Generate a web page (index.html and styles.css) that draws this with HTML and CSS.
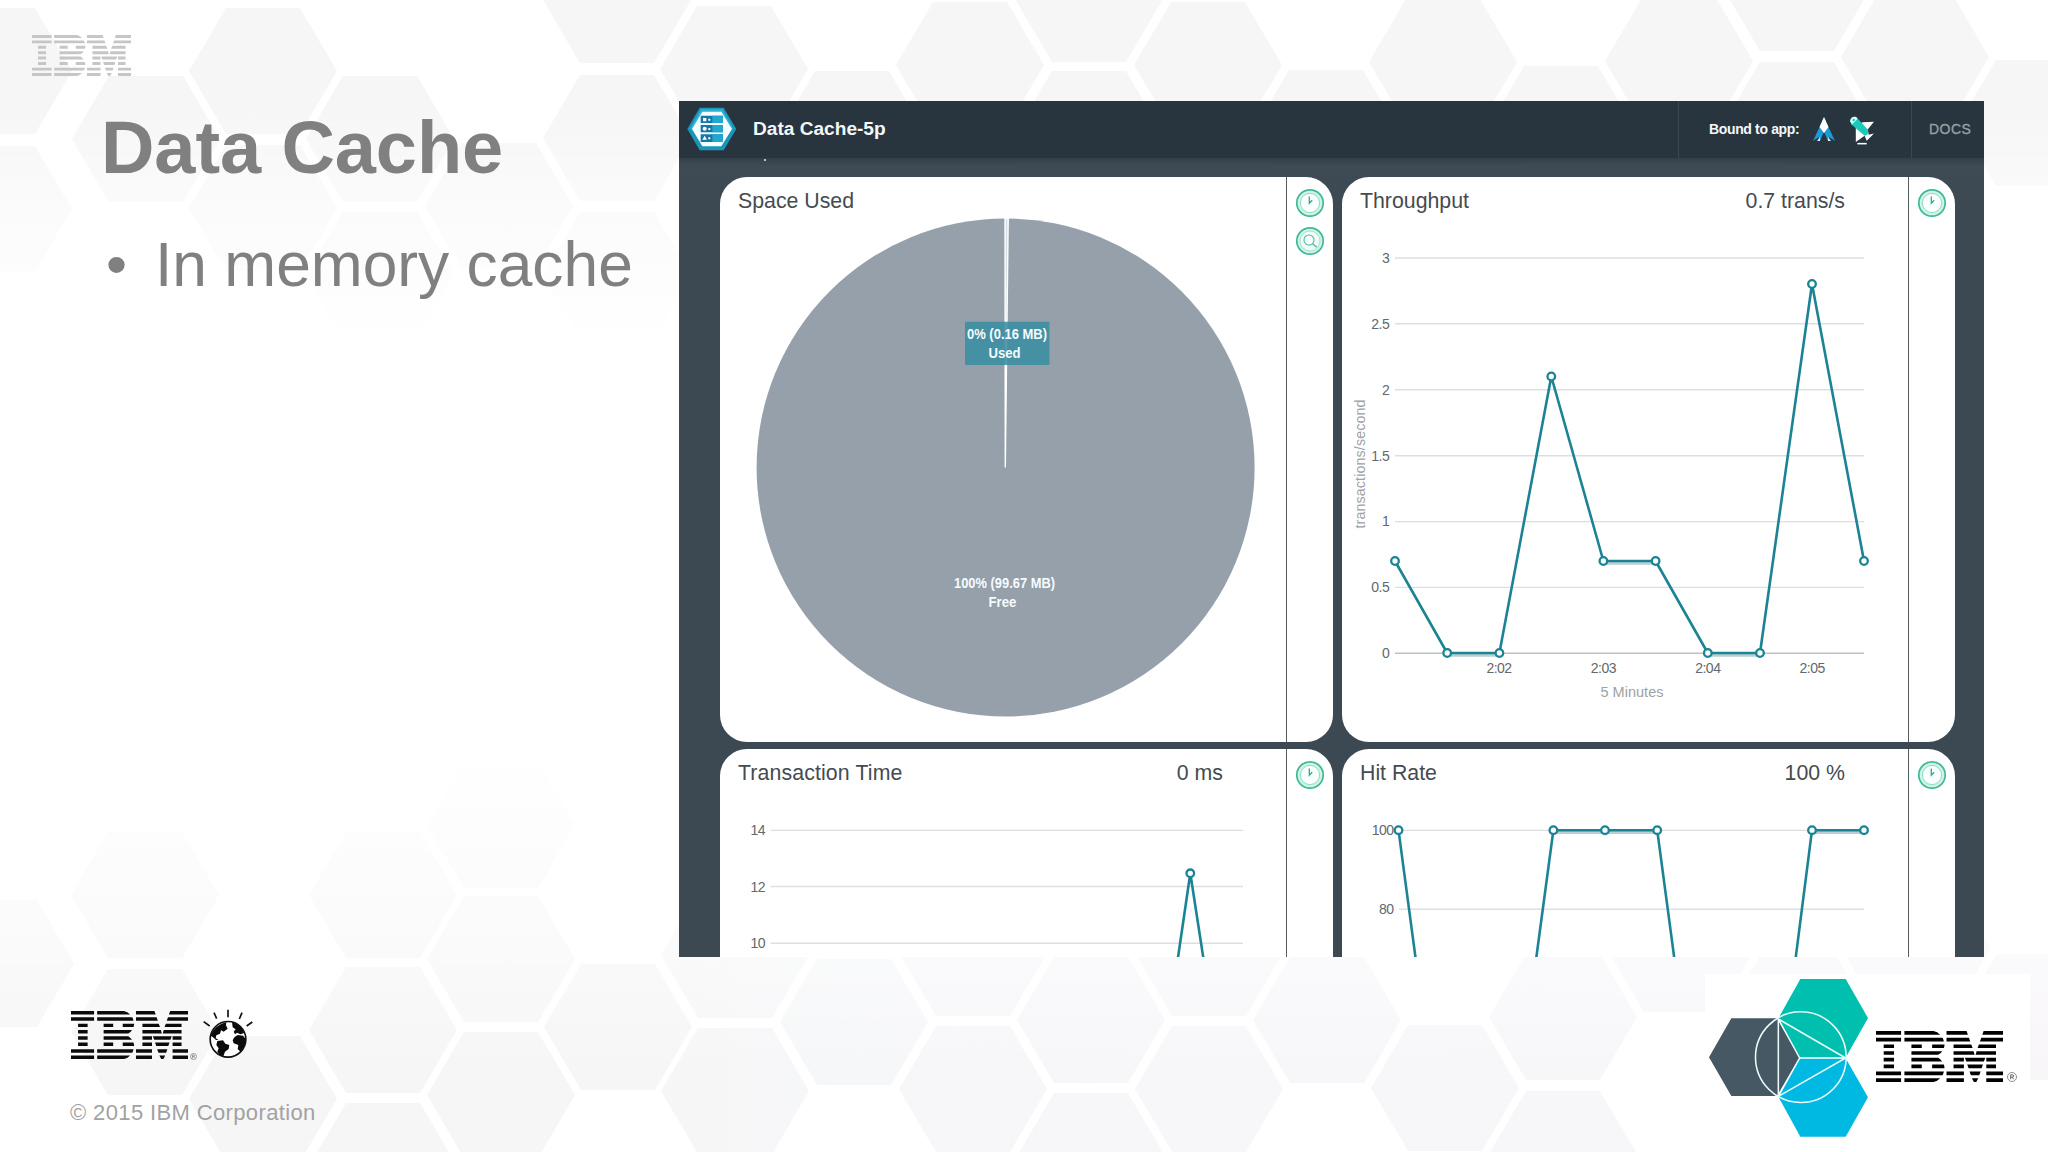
FILE: index.html
```html
<!DOCTYPE html>
<html lang="en">
<head>
<meta charset="utf-8">
<title>Data Cache</title>
<link rel="stylesheet" href="styles.css">
</head>
<body>
<svg class="defs" width="0" height="0" aria-hidden="true">
  <defs>
    <symbol id="ibm" viewBox="0 0 380 152" preserveAspectRatio="none">
      <path d="M0 0H75V11H0zM0 20H75V31H0zM23 40H54V51H23zM23 60H54V71H23zM23 80H54V91H23zM23 100H54V111H23zM0 121H75V132H0zM0 141H75V152H0z"/>
      <path d="M85 0H172Q184 2 192 11H85zM85 20H199Q202 25 203 31H85zM106 40H137V51H106zM168 40H205Q205 46 203 51H168zM106 60H198Q194 67 186 71H106zM106 80H186Q194 85 198 91H106zM106 100H137V111H106zM168 100H203Q205 106 205 111H168zM85 121H203Q202 127 199 132H85zM85 141H192Q184 150 172 152H85z"/>
      <path d="M211 0H271L275 11H211zM322 0H380V11H318zM211 20H278L282 31H211zM315 20H380V31H311zM232 40H285L289 51H232zM308 40H359V51H304zM232 60H292L295 71H232zM301 60H359V71H298zM232 80H263V91H232zM266 80H327L323 91H270zM330 80H359V91H330zM232 100H263V111H232zM273 100H320L316 111H277zM330 100H359V111H330zM211 121H263V132H211zM280 121H313L309 132H284zM330 121H380V132H330zM211 141H263V152H211zM287 141H306L300 152H293zM330 141H380V152H330z"/>
    </symbol>
    <symbol id="clock" viewBox="0 0 30 30">
      <circle cx="15" cy="15" r="13.2" fill="#d0f3e8" stroke="#3fb896" stroke-width="1.7"/>
      <circle cx="15" cy="15" r="9.6" fill="#fafffd" stroke="#8edcc6" stroke-width="1"/>
      <path d="M14.3 8.5V15.2L17.2 12.2" fill="none" stroke="#2fa889" stroke-width="1.3"/>
    </symbol>
    <symbol id="search" viewBox="0 0 30 30">
      <circle cx="15" cy="15" r="13.2" fill="#d0f3e8" stroke="#3fb896" stroke-width="1.7"/>
      <circle cx="15" cy="15" r="10" fill="#eefbf7" stroke="#a5e4d2" stroke-width="1"/>
      <circle cx="14" cy="14" r="5" fill="#f6fffc" stroke="#55b99e" stroke-width="1.1"/>
      <path d="M17.6 17.8L21.8 21.2" stroke="#55b99e" stroke-width="1.4"/>
    </symbol>
  </defs>
</svg>

<div class="slide">
  <svg class="backdrop" viewBox="0 0 2048 1152" aria-hidden="true">
    <defs>
      <linearGradient id="tint" gradientUnits="userSpaceOnUse" x1="0" y1="0" x2="2048" y2="0">
        <stop offset="0.3" stop-color="#f6f6f6"/><stop offset="0.42" stop-color="#f6f7f9"/><stop offset="0.55" stop-color="#f7f6f9"/><stop offset="1" stop-color="#f8f6f9"/>
      </linearGradient>
      <linearGradient id="fade" x1="0" y1="0" x2="0" y2="1">
        <stop offset="0" stop-color="#fff" stop-opacity="0"/><stop offset="0.09" stop-color="#fff" stop-opacity="0"/><stop offset="0.18" stop-color="#fff" stop-opacity="0.55"/><stop offset="0.3" stop-color="#fff"/><stop offset="0.65" stop-color="#fff"/><stop offset="0.8" stop-color="#fff" stop-opacity="0.55"/><stop offset="0.93" stop-color="#fff" stop-opacity="0"/>
      </linearGradient>
      <path id="cell" d="M-37 -63H37L74 0L37 63H-37L-74 0z"/>
    </defs>
    <g fill="#f6f6f6">
      <use href="#cell" x="-2" y="71"/><use href="#cell" x="-2" y="209"/>
      <use href="#cell" x="146" y="139"/>
      <use href="#cell" x="263" y="71"/><use href="#cell" x="263" y="208"/>
      <use href="#cell" x="380" y="139"/><use href="#cell" x="380" y="275"/>
      <use href="#cell" x="499" y="206"/>
      <use href="#cell" x="617" y="0"/><use href="#cell" x="617" y="138"/><use href="#cell" x="617" y="275"/>
      <use href="#cell" x="734" y="69"/><use href="#cell" x="852" y="134"/>
      <use href="#cell" x="970" y="65"/>
      <use href="#cell" x="1089" y="-1"/><use href="#cell" x="1089" y="134"/>
      <use href="#cell" x="1208" y="65"/><use href="#cell" x="1326" y="133"/>
      <use href="#cell" x="1443" y="62"/><use href="#cell" x="1561" y="129"/>
      <use href="#cell" x="1679" y="61"/>
      <use href="#cell" x="1797" y="-12"/><use href="#cell" x="1797" y="125"/>
      <use href="#cell" x="1915" y="57"/><use href="#cell" x="2033" y="123"/>
    </g>
    <path fill="url(#tint)" d="M-74 900H37L74 964L37 1027H-74z
      M108 832h74l37 63l-37 63h-74l-37-63z M108 969h74l37 63l-37 63h-74l-37-63z
      M226 1036h74l37 63l-37 63h-74l-37-63z
      M346 832h74l37 63l-37 63h-74l-37-63z M346 967h74l37 63l-37 63h-74l-37-63z M346 1103h74l37 63h-148z
      M464 762h74l37 63l-37 63h-74l-37-63z M464 896h74l37 63l-37 63h-74l-37-63z M464 1032h74l37 63l-37 63h-74l-37-63z
      M581 964h74l37 63l-37 63h-74l-37-63z
      M698 892h74l37 63l-37 63h-74l-37-63z M698 1028h74l37 63l-37 63h-74l-37-63z
      M817 959h74l37 63l-37 63h-74l-37-63z
      M936 890h74l37 63l-37 63h-74l-37-63z M936 1026h74l37 63l-37 63h-74l-37-63z
      M1054 957h74l37 63l-37 63h-74l-37-63z M1054 1093h74l37 63h-148z
      M1172 890h74l37 63l-37 63h-74l-37-63z M1172 1026h74l37 63l-37 63h-74l-37-63z
      M1290 957h74l37 63l-37 63h-74l-37-63z
      M1408 1025h74l37 63l-37 63h-74l-37-63z
      M1526 954h74l37 63l-37 63h-74l-37-63z M1526 1091h74l37 63h-148z
      M1644 886h74l37 63l-37 63h-74l-37-63z M1761 954h74l37 63l-37 63h-74l-37-63z
      M1879 886h74l37 63l-37 63h-74l-37-63z M1997 954h74l37 63l-37 63h-74l-37-63z"/>
    <rect width="2048" height="1152" fill="url(#fade)"/>
  </svg>

  <header class="brand-bar">
    <svg class="brand-mark"><use href="#ibm"/></svg>
  </header>

  <main class="content">
    <section class="notes">
      <h1 class="notes-title">Data Cache</h1>
      <ul class="notes-list"><li class="notes-item"><span class="bullet">•</span><span>In memory cache</span></li></ul>
    </section>

    <section class="console">
      <div class="console-bar">
        <svg class="service-icon" viewBox="22 34 150 132">
          <path d="M23 100L60 36H132L170 100L132 164H60z" fill="#1b94b8"/>
          <path d="M31 100L64 41H128L162 100z" fill="#2bb3d3"/>
          <path d="M37 100L68 48H125L157 100L125 152H68z" fill="#f4fdff"/>
          <path d="M63 60H130V82H63zM63 88H130V110H63zM63 116H130V139H63z" fill="#1378a8"/>
          <path d="M98 60H130V82H98zM98 88H130V110H98zM98 116H130V139H98z" fill="#22a7cf"/>
          <path d="M70 67h10v10h-10zM86 69h6v6h-6zM86 97h6v6h-6zM86 125h6v6h-6zM75 120l7 12h-14z" fill="#fff"/><circle cx="75" cy="99" r="6" fill="#fff"/>
        </svg>
        <h2 class="service-name">Data Cache-5p</h2>
        <div class="bound">
          <span class="bound-label">Bound to app:</span>
          <svg class="rocket" viewBox="0 0 22 26">
            <path d="M11 1L14 8L22 25L16 21L15 25L11 16L7 25L6 21L0 25L8 8z" fill="#1d9ad6"/>
            <path d="M11 1L15.5 11L11 17L6.5 11z" fill="#fff"/><path d="M4 25l3-4v4zM18 25l-3-4v4z" fill="#d5edf8"/>
          </svg>
          <svg class="plane" viewBox="0 0 24 28">
            <path d="M13 6L24 5.5L18 13L19 18L24 17L20 21L17 24L15 19L6.5 25V11z" fill="#fff"/>
            <path d="M1 4Q3 0 7 1L18 13Q20 18 15 19L2 8z" fill="#1cc9bb"/>
            <path d="M1 5Q2 0 7 1L8 3L3 8z" fill="#d8fffb"/><circle cx="4.4" cy="3.8" r="1.2" fill="#1cc9bb"/><path d="M8 26.7h9" stroke="#fff" stroke-width="1.5"/>
          </svg>
        </div>
        <span class="docs">DOCS</span>
      </div>

      <div class="board">
        <i class="scroll-speck"></i>
        <article class="card">
          <div class="card-main">
            <div class="card-head"><span>Space Used</span></div>
            <svg class="plot" viewBox="720 217 566 525">
              <circle cx="1005.6" cy="467.5" r="249" fill="#95a0aa"/>
              <path d="M1005.3 467.5L1005 218.6H1008.2z" fill="#d5dfe5" stroke="#fff" stroke-width="1.4"/>
              <rect x="965" y="321.7" width="84.4" height="43.3" rx="1" fill="#3a8da2" fill-opacity=".88"/>
              <g class="pie-label">
                <text x="967" y="338.6" textLength="80" lengthAdjust="spacingAndGlyphs">0% (0.16 MB)</text>
                <text x="988.5" y="357.6" textLength="32" lengthAdjust="spacingAndGlyphs">Used</text>
                <text x="954" y="588.2" textLength="101" lengthAdjust="spacingAndGlyphs">100% (99.67 MB)</text>
                <text x="988.5" y="607" textLength="28" lengthAdjust="spacingAndGlyphs">Free</text>
              </g>
            </svg>
          </div>
          <aside class="card-tools"><svg class="tool"><use href="#clock"/></svg><svg class="tool"><use href="#search"/></svg></aside>
        </article>

        <article class="card">
          <div class="card-main">
            <div class="card-head"><span>Throughput</span><span>0.7 trans/s</span></div>
            <svg class="plot" viewBox="1342 217 566 525">
              <path class="grid" d="M1395 258H1864M1395 323.8H1864M1395 389.8H1864M1395 455.7H1864M1395 521.6H1864M1395 587.4H1864"/>
              <path class="axis" d="M1395 653.3H1864"/>
              <g class="tick end">
                <text x="1389.3" y="262.5">3</text><text x="1389.3" y="328.5">2.5</text><text x="1389.3" y="394.5">2</text><text x="1389.3" y="460.5">1.5</text><text x="1389.3" y="526.3">1</text><text x="1389.3" y="592.3">0.5</text><text x="1389.3" y="658">0</text>
              </g>
              <g class="tick mid">
                <text x="1499" y="673.3">2:02</text><text x="1603.4" y="673.3">2:03</text><text x="1707.8" y="673.3">2:04</text><text x="1812.2" y="673.3">2:05</text>
              </g>
              <text class="axis-name" x="1600.5" y="697" textLength="63" lengthAdjust="spacingAndGlyphs">5 Minutes</text>
              <text class="axis-name" transform="translate(1365.3 528.5) rotate(-90)" textLength="129" lengthAdjust="spacing">transactions/second</text>
              <path class="shade" d="M1447.2 655.3H1499.4M1603.4 563.3H1655.6M1707.8 655.3H1760"/>
              <path class="series" d="M1395 561L1447.2 653H1499.4L1551.3 376.5L1603.4 561H1655.6L1707.8 653H1760L1812 284L1864 561"/>
              <g class="dots"><circle cx="1395" cy="561" r="3.8"/><circle cx="1447.2" cy="653" r="3.8"/><circle cx="1499.4" cy="653" r="3.8"/><circle cx="1551.3" cy="376.5" r="3.8"/><circle cx="1603.4" cy="561" r="3.8"/><circle cx="1655.6" cy="561" r="3.8"/><circle cx="1707.8" cy="653" r="3.8"/><circle cx="1760" cy="653" r="3.8"/><circle cx="1812" cy="284" r="3.8"/><circle cx="1864" cy="561" r="3.8"/></g>
            </svg>
          </div>
          <aside class="card-tools"><svg class="tool"><use href="#clock"/></svg></aside>
        </article>

        <article class="card">
          <div class="card-main">
            <div class="card-head"><span class="wide">Transaction Time</span><span>0 ms</span></div>
            <svg class="plot" viewBox="720 789 566 525">
              <path class="grid" d="M770.6 830.4H1243M770.6 886.5H1243M770.6 943.3H1243"/>
              <g class="tick end"><text x="765" y="834.8">14</text><text x="765" y="891.5">12</text><text x="765" y="947.8">10</text></g>
              <path class="series" d="M1174 985L1190.3 873.3L1207.5 985"/>
              <g class="dots"><circle cx="1190.3" cy="873.3" r="3.8"/></g>
            </svg>
          </div>
          <aside class="card-tools"><svg class="tool"><use href="#clock"/></svg></aside>
        </article>

        <article class="card">
          <div class="card-main">
            <div class="card-head"><span>Hit Rate</span><span>100 %</span></div>
            <svg class="plot" viewBox="1342 789 566 525">
              <path class="grid" d="M1399 830.4H1864M1399 909.2H1864"/>
              <g class="tick end"><text x="1393.5" y="835">100</text><text x="1393.5" y="914">80</text></g>
              <path class="shade" d="M1553.4 832.4H1657.2M1812 832.4H1864"/>
              <path class="series" d="M1398.5 830.2L1417.3 971M1534.5 971L1553.4 830.2H1657.2L1676 971M1794 971L1812 830.2H1864"/>
              <g class="dots"><circle cx="1398.5" cy="830.2" r="3.8"/><circle cx="1553.4" cy="830.2" r="3.8"/><circle cx="1605" cy="830.2" r="3.8"/><circle cx="1657.2" cy="830.2" r="3.8"/><circle cx="1812" cy="830.2" r="3.8"/><circle cx="1864" cy="830.2" r="3.8"/></g>
            </svg>
          </div>
          <aside class="card-tools"><svg class="tool"><use href="#clock"/></svg></aside>
        </article>
      </div>
    </section>
  </main>

  <footer class="foot">
    <div class="foot-left">
      <div class="foot-logos">
        <svg class="foot-ibm"><use href="#ibm"/></svg>
        <svg class="reg" viewBox="0 0 10 10"><circle cx="5" cy="5" r="4.3" fill="none" stroke="#777"/><path d="M3.5 7.5V2.8H5.3Q6.7 2.8 6.7 4Q6.7 5.1 5.3 5.1H3.5M5.2 5.1L6.8 7.5" fill="none" stroke="#777"/></svg>
        <svg class="planet" viewBox="455 55 156 156">
          <path d="M460 96L478 109M491 69L499 87M533 60V83M575 69L567 88M606 97L589 109" stroke="#111" stroke-width="5" fill="none"/>
          <circle cx="533" cy="149" r="53.5" fill="#fff" stroke="#111" stroke-width="5"/>
          <path d="M481 138Q490 108 528 97L527 107L532 117L520 126L512 122L509 132L498 137L496 146L505 150L497 151L488 143z" fill="#0b0b0b"/>
          <path d="M501 154L518 152L525 162L537 166L535 178L524 186L519 200Q507 197 501 186L505 176L498 166z" fill="#0b0b0b"/>
          <path d="M545 97Q572 105 582 130L570 134L560 129L554 134L550 126L556 119L547 113z" fill="#0b0b0b"/>
          <path d="M552 143L562 136L578 138L586 148Q585 172 570 186L562 178L564 166L550 161L547 152z" fill="#0b0b0b"/>
        </svg>
      </div>
      <p class="copyright">© 2015 IBM Corporation</p>
    </div>
    <div class="foot-right">
      <svg class="bluemix" viewBox="85 54 483 480">
        <path d="M88 292L155 175H292L360 292L292 408H155z" fill="#465864"/>
        <path d="M362 57H498L565 174L498 293H360L296 175z" fill="#00bfae"/>
        <path d="M360 295H498L565 412L498 530H362L296 410z" fill="#00b9e2"/>
        <g fill="none" stroke="#effcfc" stroke-width="4.6"><circle cx="363.5" cy="291.5" r="136"/><path d="M296 177V409M296 177L498 294L296 409M296 177L360 294L296 409M360 294H498"/></g>
      </svg>
      <svg class="right-ibm"><use href="#ibm"/></svg>
      <svg class="reg reg-big" viewBox="0 0 10 10"><circle cx="5" cy="5" r="4.5" fill="none" stroke="#777" stroke-width=".8"/><path d="M3.7 7.3V2.8H5.3Q6.6 2.8 6.6 4Q6.6 5.1 5.3 5.1H3.7M5.2 5.1L6.7 7.3" fill="none" stroke="#666"/></svg>
    </div>
  </footer>
</div>
</body>
</html>
```
FILE: styles.css
```css
* { box-sizing: border-box; }
body { margin: 0; background: #fff; font-family: "Liberation Sans", Arial, sans-serif; }
svg { display: block; flex: none; }
.defs { position: absolute; }
h1, h2, p, ul { margin: 0; padding: 0; list-style: none; }

.slide { position: relative; width: 2048px; height: 1152px; overflow: hidden; background: #fff; display: flex; flex-direction: column; isolation: isolate; }
.backdrop { position: absolute; inset: 0; width: 2048px; height: 1152px; z-index: -1; }

.brand-bar { height: 101px; padding: 35px 0 0 32px; flex: none; }
.brand-mark { width: 99px; height: 41px; fill: #c6c6c6; }

.content { display: flex; height: 856px; flex: none; }
.notes { width: 679px; flex: none; padding-left: 101px; color: #808080; white-space: nowrap; }
.notes-title { padding-top: 5px; font-size: 74px; line-height: 84px; font-weight: 700; letter-spacing: -0.1px; }
.notes-list { padding-top: 40px; }
.notes-item { display: flex; font-size: 62.3px; line-height: 70px; }
.bullet { width: 48px; margin: 0 1px 0 5px; flex: none; font-size: 60px; }

.console { width: 1305px; overflow: hidden; background: #3c4953; display: flex; flex-direction: column; }
.console-bar { height: 57px; flex: none; display: flex; align-items: center; background: #28343e; color: #f2f8fb; white-space: nowrap; padding-bottom: 1px; }
.service-icon { width: 50px; height: 44px; margin: 0 16px 1px 8px; }
.service-name { flex: 1; font-size: 19.1px; line-height: 22px; font-weight: 700; }
.bound { width: 233px; height: 57px; border-left: 1px solid #3c4750; display: flex; align-items: center; padding-left: 30px; }
.bound-label { width: 104px; font-size: 14px; letter-spacing: -0.35px; font-weight: 700; }
.rocket { width: 22px; height: 26px; }
.plane { width: 25px; height: 29px; margin: 2px 0 0 14px; }
.docs { width: 73px; height: 57px; line-height: 56px; border-left: 1px solid #3c4750; padding-left: 17px; color: #98a1a7; font-size: 14px; letter-spacing: 0.5px; -webkit-text-stroke: 0.3px #98a1a7; }

.board { position: relative; flex: 1; min-height: 0; display: grid; grid-template-columns: 613px 613px; grid-template-rows: 565px 565px; gap: 7px 9px; padding: 19px 0 0 41px; background: linear-gradient(#33404a, #3e4b55 8px, #3c4953 60px); }
.scroll-speck { position: absolute; left: 85px; top: 1px; width: 2px; height: 2px; background: #b9c5cc; }
.card { display: flex; border-radius: 27px; overflow: hidden; background: #fff; }
.card-main { width: 566px; flex: none; }
.card-head { height: 40px; padding: 12px 63px 0 18px; display: flex; justify-content: space-between; color: #454b50; font-size: 21.3px; line-height: 24px; white-space: nowrap; }
.wide { letter-spacing: 0.12px; }
.plot { width: 566px; height: 525px; }
.card-tools { flex: 1; border-left: 1px solid #535b60; padding-top: 11px; display: flex; flex-direction: column; align-items: center; gap: 8px; }
.tool { width: 30px; height: 30px; }

.grid { stroke: #dcdfe1; stroke-width: 1.4; fill: none; }
.axis { stroke: #bfc2c4; stroke-width: 1.5; fill: none; }
.tick { font-size: 14px; letter-spacing: -0.5px; fill: #62686c; }
.end { text-anchor: end; }
.mid { text-anchor: middle; }
.axis-name { font-size: 14.3px; fill: #9da2a6; }
.series { fill: none; stroke: #1c8395; stroke-width: 2.6; stroke-linejoin: round; }
.shade { fill: none; stroke: #b9cfd4; stroke-width: 3; }
.dots { fill: #f4fdff; stroke: #1c8395; stroke-width: 2.3; }
.pie-label { font-size: 13.8px; font-weight: 700; fill: #f5fbff; }

.foot { flex: 1; display: flex; justify-content: space-between; }
.foot-left { padding: 48px 0 0 70px; }
.foot-logos { display: flex; height: 57px; }
.foot-ibm { width: 117px; height: 48px; margin: 6px 0 0 1px; fill: #0b0b0b; }
.reg { width: 7px; height: 7px; margin: 48px 0 0 2px; }
.planet { width: 52px; height: 52px; margin: 3px 0 0 5px; }
.copyright { padding-top: 38px; font-size: 22px; line-height: 26px; letter-spacing: 0.37px; color: #a2a2a2; }
.foot-right { width: 325px; height: 167px; margin: 17px 18px 0 0; background: #fff; display: flex; }
.bluemix { width: 161px; height: 160px; margin: 4px 0 0 3px; }
.right-ibm { width: 127px; height: 51px; margin: 57px 0 0 7px; fill: #000; }
.reg-big { width: 10px; height: 10px; margin: 98px 0 0 4px; }
```
